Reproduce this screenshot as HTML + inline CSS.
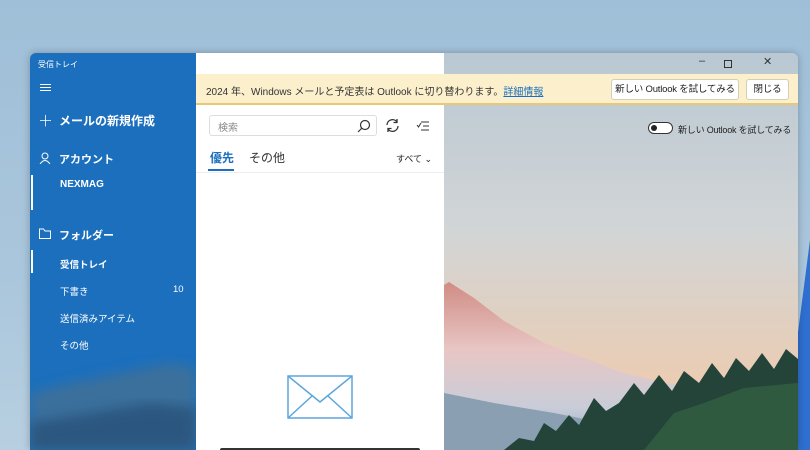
<!DOCTYPE html>
<html><head><meta charset="utf-8"><style>
*{margin:0;padding:0;box-sizing:border-box}
body{width:810px;height:450px;overflow:hidden;position:relative;font-family:"Liberation Sans","Noto Sans CJK JP",sans-serif;background:linear-gradient(180deg,#9fbfd8 0%,#aac6dc 60%,#b7cfe0 100%)}
.win{position:absolute;left:30px;top:53px;width:768px;height:397px;overflow:hidden;border-radius:6px 6px 0 0;box-shadow:0 0 8px rgba(0,0,0,.25)}
.side{position:absolute;left:0;top:0;width:166px;height:397px;background:#1b6fbd;color:#fff;overflow:hidden}
.mid{position:absolute;left:166px;top:0;width:248px;height:397px;background:#fff}
.right{position:absolute;left:414px;top:0;width:354px;height:397px}
.t{position:absolute;white-space:nowrap}
.banner{position:absolute;left:166px;top:21px;width:602px;height:31px;background:#fcf0cc;border-bottom:2px solid #e9c873;font-size:10px;color:#333}
.btn{position:absolute;top:5px;height:21px;background:#fff;border:1px solid #d4cdb8;border-radius:3px;font-size:9.5px;line-height:19px;text-align:center;color:#222;white-space:nowrap;letter-spacing:-.2px}
</style></head><body>
<svg style="position:absolute;left:795px;top:240px" width="15" height="210"><path d="M15 0 L15 210 L0 210 L2 100 Z" fill="#2f6fd0"/></svg>
<div class="win">
 <div class="right">
  <svg width="354" height="397" viewBox="0 0 354 397">
   <defs><linearGradient id="sky" x1="0" y1="0" x2="0" y2="1"><stop offset="0" stop-color="#b9c8d3"/><stop offset=".45" stop-color="#d2d5d6"/><stop offset=".85" stop-color="#ecccb1"/></linearGradient>
   <linearGradient id="mt" x1="0" y1="0" x2="0" y2="1"><stop offset="0" stop-color="#d08c84"/><stop offset=".4" stop-color="#e8c6c4"/><stop offset=".75" stop-color="#c9cdd9"/><stop offset="1" stop-color="#8ea3bb"/></linearGradient></defs>
   <rect width="354" height="397" fill="url(#sky)"/>
   <path d="M0 232 L5 229 L30 245 L60 268 L100 290 L140 305 L180 320 L220 330 L260 332 L300 330 L300 397 L0 397 Z" fill="url(#mt)"/>
   <path d="M0 340 L50 350 L110 360 L150 368 L150 397 L0 397 Z" fill="#8aa0b2"/>
   <path d="M60 397 L75 385 L90 388 L100 370 L112 378 L125 362 L135 372 L150 345 L162 358 L175 350 L190 330 L200 342 L215 322 L228 338 L240 318 L255 330 L268 310 L280 325 L292 305 L305 318 L318 300 L330 316 L342 296 L354 306 L354 397 Z" fill="#24443a"/>
   <path d="M200 397 L230 360 L260 350 L300 335 L354 330 L354 397 Z" fill="#2f5a40"/>
  </svg>
  <div class="t" style="left:255px;top:2px;font-size:11px;color:#333">–</div>
  <div style="position:absolute;left:280px;top:7px;width:8px;height:8px;border:1px solid #333"></div>
  <div class="t" style="left:319px;top:2px;font-size:11px;color:#333">✕</div>
  <div style="position:absolute;left:204px;top:69px;width:25px;height:12px;border:1px solid #333;border-radius:6px;background:#fff"><div style="position:absolute;left:2px;top:2px;width:6px;height:6px;border-radius:3px;background:#222"></div></div>
  <div class="t" style="left:234px;top:70px;font-size:9px;color:#222;letter-spacing:-.2px">新しい Outlook を試してみる</div>
 </div>
 <div class="mid">
  <div style="position:absolute;left:13px;top:62px;width:168px;height:21px;border:1px solid #ddd;border-radius:3px"></div>
  <div class="t" style="left:22px;top:66px;font-size:10px;color:#888">検索</div>
  <svg style="position:absolute;left:161px;top:66px" width="14" height="14"><circle cx="8" cy="6" r="4.5" fill="none" stroke="#333" stroke-width="1.2"/><path d="M5 9 L1 13" stroke="#333" stroke-width="1.2"/></svg>
  <svg style="position:absolute;left:189px;top:65px" width="15" height="15"><path d="M2 7 A5.5 5.5 0 0 1 12 4 M13 8 A5.5 5.5 0 0 1 3 11" fill="none" stroke="#333" stroke-width="1.3"/><path d="M12 1 V4.5 H8.5 M3 14 V10.5 H6.5" fill="none" stroke="#333" stroke-width="1.3"/></svg>
  <svg style="position:absolute;left:220px;top:66px" width="14" height="13"><path d="M5 3 H13 M7 7 H13 M5 11 H13 M1 6 L2.5 8 L5 4" fill="none" stroke="#333" stroke-width="1"/></svg>
  <div class="t" style="left:14px;top:96px;font-size:12px;color:#1b6fbd;font-weight:bold">優先</div>
  <div style="position:absolute;left:12px;top:116px;width:26px;height:2px;background:#1b6fbd"></div>
  <div class="t" style="left:53px;top:96px;font-size:12px;color:#333">その他</div>
  <div class="t" style="left:200px;top:99px;font-size:9px;color:#222">すべて ⌄</div>
  <div style="position:absolute;left:0;top:119px;width:248px;height:1px;background:#eee"></div>
  <svg style="position:absolute;left:91px;top:322px" width="68" height="46"><rect x="1" y="1" width="64" height="42" fill="none" stroke="#5aa6dd" stroke-width="1.5"/><path d="M1 1 L33 27 L65 1 M1 43 L25 21 M65 43 L41 21" fill="none" stroke="#5aa6dd" stroke-width="1.5"/></svg>
  <div style="position:absolute;left:24px;top:395px;width:200px;height:4px;background:#333;border-radius:2px"></div>
 </div>
 <div class="side">
  <svg style="position:absolute;left:0;top:290px" width="166" height="107"><defs><filter id="b"><feGaussianBlur stdDeviation="6"/></filter></defs><path d="M0 50 L40 40 L90 30 L140 20 L166 25 L166 107 L0 107 Z" fill="#3b6f9c" filter="url(#b)"/><path d="M0 80 L60 70 L120 60 L166 65 L166 107 L0 107 Z" fill="#2a5680" filter="url(#b)"/></svg>
  <div class="t" style="left:8px;top:6px;font-size:8px">受信トレイ</div>
  <div style="position:absolute;left:10px;top:31px;width:11px;height:1px;background:#fff;box-shadow:0 3px #fff,0 6px #fff"></div>
  <div class="t" style="left:8px;top:57px;font-size:15px;font-weight:300">＋</div>
  <div class="t" style="left:29px;top:59px;font-size:12px;font-weight:bold">メールの新規作成</div>
  <svg style="position:absolute;left:9px;top:99px" width="12" height="12"><circle cx="6" cy="4" r="3" fill="none" stroke="#fff"/><path d="M1 12 Q6 5 11 12" fill="none" stroke="#fff"/></svg>
  <div class="t" style="left:29px;top:98px;font-size:11px;font-weight:bold">アカウント</div>
  <div style="position:absolute;left:1px;top:122px;width:2px;height:35px;background:#fff"></div>
  <div class="t" style="left:30px;top:126px;font-size:10px;font-weight:bold">NEXMAG</div>
  <svg style="position:absolute;left:9px;top:175px" width="12" height="11"><path d="M0.5 1 H4.5 L6 3 H11.5 V10.5 H0.5 Z" fill="none" stroke="#fff"/></svg>
  <div class="t" style="left:29px;top:174px;font-size:11px;font-weight:bold">フォルダー</div>
  <div style="position:absolute;left:1px;top:197px;width:2px;height:23px;background:#fff"></div>
  <div class="t" style="left:30px;top:204px;font-size:9.5px;font-weight:bold">受信トレイ</div>
  <div class="t" style="left:30px;top:231px;font-size:9.5px">下書き</div>
  <div class="t" style="left:143px;top:231px;font-size:9.5px">10</div>
  <div class="t" style="left:30px;top:258px;font-size:9.5px">送信済みアイテム</div>
  <div class="t" style="left:30px;top:285px;font-size:9.5px">その他</div>
 </div>
 <div class="banner">
  <div class="t" style="left:10px;top:9px">2024 年、Windows メールと予定表は Outlook に切り替わります。<span style="color:#1b6fbd;text-decoration:underline">詳細情報</span></div>
  <div class="btn" style="left:415px;width:128px">新しい Outlook を試してみる</div>
  <div class="btn" style="left:550px;width:43px">閉じる</div>
 </div>
</div>
</body></html>
